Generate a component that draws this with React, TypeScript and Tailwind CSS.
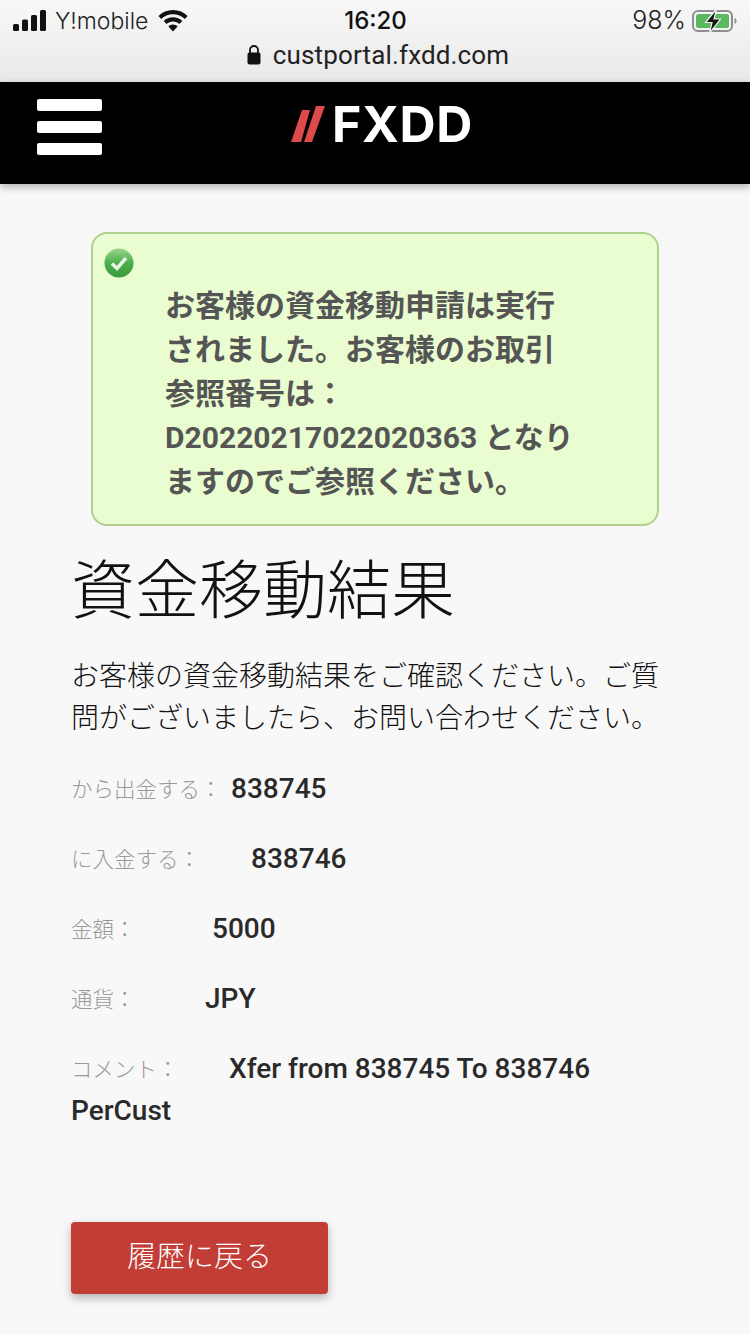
const jpFont = "font-['Roboto','Noto_Sans_CJK_JP',sans-serif]";

const ROWS = [
  { label: 'から出金する：', value: '838745', width: 'w-[160px]' },
  { label: 'に入金する：', value: '838746', width: 'w-[180px]' },
  { label: '金額：', value: '5000', width: 'w-[141px]' },
  { label: '通貨：', value: 'JPY', width: 'w-[134px]' },
  { label: 'コメント：', value: 'Xfer from 838745 To 838746 PerCust', width: 'w-[158px]' },
];

function SignalIcon() {
  return (
    <svg width="34" height="21" viewBox="0 0 34 21" fill="#111">
      <rect x="0" y="14" width="6" height="7" rx="1.5" />
      <rect x="9" y="9.500" width="6" height="11.500" rx="1.5" />
      <rect x="18" y="5" width="6" height="16" rx="1.5" />
      <rect x="27" y="0" width="6" height="21" rx="1.5" />
    </svg>
  );
}

function WifiIcon() {
  return (
    <svg width="30" height="22" viewBox="0 0 30 22" fill="#111">
      <path d="M15 0C9.3 0 4.2 2.2.4 5.9l2.8 3C6.3 6 10.4 4.2 15 4.2s8.7 1.8 11.8 4.7l2.8-3C25.8 2.2 20.7 0 15 0z" />
      <path d="M15 7.3c-3.6 0-6.8 1.4-9.3 3.6l2.9 3c1.7-1.5 3.9-2.4 6.4-2.4s4.7.9 6.4 2.4l2.9-3c-2.5-2.2-5.7-3.6-9.3-3.6z" />
      <path d="M15 14.6c-1.8 0-3.4.7-4.6 1.8L15 21.4l4.6-5c-1.2-1.1-2.8-1.8-4.6-1.8z" />
    </svg>
  );
}

function BatteryIcon() {
  return (
    <svg width="48" height="24" viewBox="0 0 48 24">
      <rect x="3" y="2" width="39" height="20" rx="5" fill="none" stroke="#8e8e8e" strokeWidth="2" />
      <rect x="6" y="5" width="33" height="14" rx="2.5" fill="#5cb85f" />
      <path d="M44.5 9v6c1.400-.5 2-1.700 2-3s-.6-2.500-2-3z" fill="#8e8e8e" />
      <path d="M26.500 0 15.500 13.500h6.500L19.500 24l11-14h-6.500z" fill="#111" stroke="#f1f1f1" strokeWidth="1.200" />
    </svg>
  );
}

function LockIcon() {
  return (
    <svg width="14" height="20" viewBox="0 0 14 20" fill="#111">
      <path d="M3 8V5a4 4 0 0 1 8 0v3" fill="none" stroke="#111" strokeWidth="1.800" />
      <rect x="0.500" y="7.500" width="13" height="12" rx="2" />
    </svg>
  );
}

function CheckBadge() {
  return (
    <svg width="30" height="30" viewBox="0 0 30 30" className="absolute left-[11px] top-[14px]">
      <defs>
        <linearGradient id="badge" x1="0" y1="0" x2="0" y2="1">
          <stop offset="0" stopColor="#9ad68c" />
          <stop offset="0.500" stopColor="#4cae4a" />
          <stop offset="1" stopColor="#3a9a3c" />
        </linearGradient>
      </defs>
      <circle cx="15" cy="15" r="14.500" fill="url(#badge)" />
      <path d="M8 15.500l5 5 9-10.500" fill="none" stroke="#e9f3e6" strokeWidth="3.500" />
    </svg>
  );
}

function Logo() {
  return (
    <div className="flex items-center gap-[6px]">
      <svg width="35" height="36" viewBox="0 0 35 36" fill="#dc4a4c">
        <polygon points="0,36 10,36 19,4 11,4" />
        <polygon points="13,36 21,36 34,0 25,0" />
      </svg>
      <span className="font-['Inter',sans-serif] text-[50px] leading-none font-bold tracking-[0.6px] text-white">FXDD</span>
    </div>
  );
}

export default function App() {
  return (
    <div className={`min-h-screen bg-[#f8f8f8] ${jpFont}`}>
      {/* browser chrome */}
      <div className="h-[82px] bg-gradient-to-b from-[#f8f8f8] to-[#e9e9e9] pl-[13px] pr-[12px] pt-[2px] font-['Inter',sans-serif] text-[#111]">
        <div className="grid h-[30px] grid-cols-3 items-center">
          <div className="flex items-center gap-[8px]">
            <SignalIcon />
            <span className="text-[23px] font-light text-[#222]">Y!mobile</span>
            <span className="ml-[2px]"><WifiIcon /></span>
          </div>
          <div className="text-center text-[24px] font-medium">16:20</div>
          <div className="flex items-center justify-end gap-[4px]">
            <span className="text-[25px] font-light text-[#222]">98%</span>
            <BatteryIcon />
          </div>
        </div>
        <div className="mt-[6px] flex items-center justify-center gap-[12px] pl-[5px]">
          <LockIcon />
          <span className="font-['Roboto',sans-serif] text-[26px] leading-[34px] tracking-[0.15px] text-[#222]">custportal.fxdd.com</span>
        </div>
      </div>

      {/* header */}
      <header className="relative flex h-[102px] bg-black shadow-[0_3px_8px_rgba(0,0,0,0.3)]">
        <div className="ml-[37px] mt-[17px] flex w-[65px] flex-col gap-[10px]">
          <div className="h-[12px] rounded-[2px] bg-white" />
          <div className="h-[12px] rounded-[2px] bg-white" />
          <div className="h-[12px] rounded-[2px] bg-white" />
        </div>
        <div className="ml-[189px] mt-[17px]">
          <Logo />
        </div>
      </header>

      <div className="mx-[91px] mt-[48px] relative rounded-[16px] border-2 border-[#b0cf8d] bg-[#e9fdd0] pb-[20px] pl-[72px] pr-[82px] pt-[50px]">
        <CheckBadge />
        <p className="text-[30px] leading-[44px] font-bold text-[#555]">
          お客様の資金移動申請は実行されました。お客様のお取引参照番号は：D20220217022020363 となりますのでご参照ください。
        </p>
      </div>

      <main className="pl-[71px] pr-[72px]">
        <h1 className="mt-[21px] text-[64px] leading-[90px] font-light text-[#111]">資金移動結果</h1>
        <p className="mt-[19px] text-[28px] leading-[42px] font-light text-[#111]">
          お客様の資金移動結果をご確認ください。ご質問がございましたら、お問い合わせください。
        </p>

        <div className="mt-[28px] flex flex-col gap-[28px]">
          {ROWS.map((row) => (
            <div key={row.label} className="text-[28px] leading-[42px] font-medium text-[#2a2a2a]">
              <span className={`inline-block translate-y-px align-top text-[21.5px] font-light text-[#999] ${row.width}`}>{row.label}</span>
              {row.value}
            </div>
          ))}
        </div>

        <button className="mt-[90px] mb-[40px] block h-[72px] w-[257px] rounded-[4px] bg-[#c23d35] text-[29px] font-light text-white shadow-[0_4px_10px_rgba(0,0,0,0.28)]">
          履歴に戻る
        </button>
      </main>
    </div>
  );
}
